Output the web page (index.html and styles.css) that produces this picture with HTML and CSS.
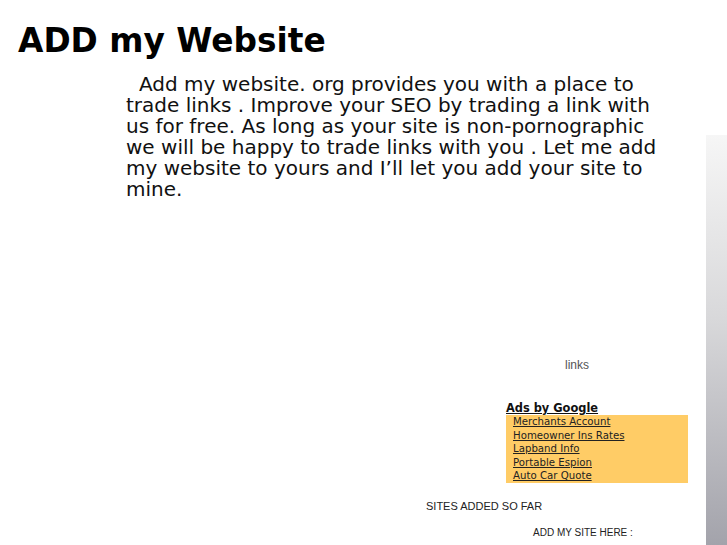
FILE: index.html
```html
<!DOCTYPE html>
<html lang="en">
<head>
<meta charset="utf-8">
<title>ADD my Website</title>
<link rel="stylesheet" href="styles.css">
</head>
<body>
<div class="page">
  <h1 class="title">ADD my Website</h1>
  <p class="intro">Add my website. org provides you with a place to trade links . Improve your SEO by trading a link with us for free. As long as your site is non-pornographic we will be happy to trade links with you . Let me add my website to yours and I’ll let you add your site to mine.</p>
  <div class="links">links</div>
  <div class="ads">
    <a class="ads-title" href="#">Ads by Google</a>
    <ul class="ads-box">
      <li><a href="#">Merchants Account</a></li>
      <li><a href="#">Homeowner Ins Rates</a></li>
      <li><a href="#">Lapband Info</a></li>
      <li><a href="#">Portable Espion</a></li>
      <li><a href="#">Auto Car Quote</a></li>
    </ul>
  </div>
  <div class="sites">SITES ADDED SO FAR</div>
  <div class="add-here">ADD MY SITE HERE :</div>
</div>
</body>
</html>
```

FILE: styles.css
```css
html {
  background: #ffffff linear-gradient(#f6f6f6, #d8d8da 45%, #a3a3ab) no-repeat right 0 top 135px / 21px 410px;
  min-height: 100%;
}
body {
  margin: 0;
  font-family: "DejaVu Sans", sans-serif;
  color: #000;
}
.page {
  display: flex;
  flex-direction: column;
  align-items: flex-start;
}
.title {
  margin: 22px 0 0 18px;
  font-size: 32.8px;
  font-weight: 700;
  line-height: 38.4px;
}
.intro {
  margin: 14px 0 0 126px;
  width: 540px;
  font-size: 20px;
  line-height: 20.85px;
  text-indent: 13px;
  color: #111;
}
.links {
  margin: 159px 0 0 565px;
  font-family: "Liberation Sans", Arial, sans-serif;
  font-size: 12px;
  line-height: normal;
  color: #555;
}
.ads {
  margin: 29.6px 0 0 506px;
  display: flex;
  flex-direction: column;
  align-items: flex-start;
}
.ads-title {
  display: block;
  font-size: 11.4px;
  font-weight: 700;
  line-height: 13px;
  color: #111;
  text-decoration: underline;
}
.ads-box {
  list-style: none;
  margin: 0;
  padding: 0 0 0 7px;
  width: 175px;
  background: #ffcc66;
}
.ads-box li {
  font-size: 10.2px;
  line-height: 13.5px;
}
.ads-box a {
  color: #222;
  text-decoration: underline;
}
.sites {
  margin: 17px 0 0 426px;
  font-family: "Liberation Sans", Arial, sans-serif;
  font-size: 11px;
  line-height: normal;
  color: #222;
}
.add-here {
  margin: 15.2px 0 0 533px;
  font-family: "Liberation Sans", Arial, sans-serif;
  font-size: 10px;
  line-height: normal;
  color: #222;
}
```
